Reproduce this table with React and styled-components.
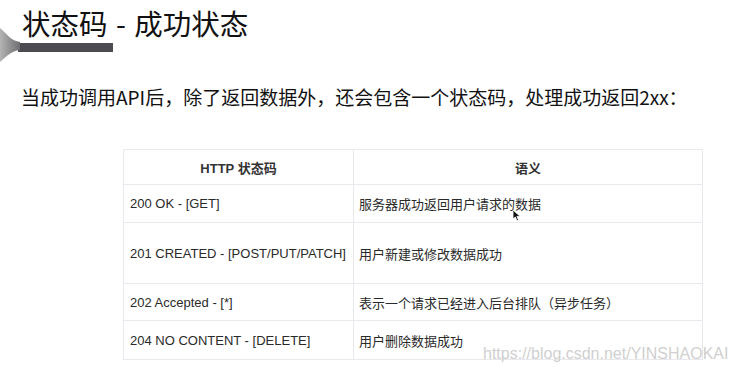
import React from "react";
import styled, { createGlobalStyle } from "styled-components";

const rows = [
  { code: "200 OK - [GET]", meaning: "服务器成功返回用户请求的数据", height: 38 },
  { code: "201 CREATED - [POST/PUT/PATCH]", meaning: "用户新建或修改数据成功", height: 61 },
  { code: "202 Accepted - [*]", meaning: "表示一个请求已经进入后台排队（异步任务）", height: 37 },
  { code: "204 NO CONTENT - [DELETE]", meaning: "用户删除数据成功", height: 39 },
];

const App = () => {
  return (
    <Page>
      <GlobalStyle />
      <Header>
        <Title>状态码 - 成功状态</Title>
        <Accent>
          <Flare width="20" height="36" viewBox="0 0 20 36">
            <defs>
              <linearGradient id="flare" x1="0" y1="0" x2="1" y2="0">
                <stop offset="0" stopColor="#b4b4b4" />
                <stop offset="1" stopColor="#6e6e72" />
              </linearGradient>
            </defs>
            <path d="M0 0 C7 6 11 13 20 14 L20 22 C11 23 7 28 0 34 Z" fill="url(#flare)" />
          </Flare>
          <Bar />
        </Accent>
      </Header>

      <Lead>当成功调用API后，除了返回数据外，还会包含一个状态码，处理成功返回2xx：</Lead>

      <Table>
        <thead>
          <tr>
            <HeadCell>HTTP 状态码</HeadCell>
            <HeadCell>语义</HeadCell>
          </tr>
        </thead>
        <tbody>
          {rows.map((row) => (
            <Row key={row.code} h={row.height}>
              <CodeCell>{row.code}</CodeCell>
              <Cell>{row.meaning}</Cell>
            </Row>
          ))}
        </tbody>
      </Table>

      <Cursor width="9" height="13" viewBox="0 0 9 13">
        <path d="M1 1 L1 10 L3.3 8 L5 11.8 L6.5 11.1 L4.9 7.5 L8 7.3 Z" fill="#111" stroke="#fff" strokeWidth="0.8" />
      </Cursor>
      <Watermark>https://blog.csdn.net/YINSHAOKAI</Watermark>
    </Page>
  );
};

export default App;

const GlobalStyle = createGlobalStyle`
  html, body {
    margin: 0;
    padding: 0;
    background: #ffffff;
  }
  body {
    font-family: "Liberation Sans", "Noto Sans CJK SC", sans-serif;
  }
`;

const Page = styled.div`
  position: relative;
  width: 735px;
  height: 372px;
  overflow: hidden;
  background: #ffffff;
`;

const Header = styled.div`
  position: relative;
  padding-top: 5px;
`;

const Title = styled.h1`
  margin: 0 0 0 22px;
  font-family: "Noto Sans CJK SC", sans-serif;
  font-size: 28.5px;
  font-weight: 400;
  line-height: 36px;
  word-spacing: 2px;
  color: #111111;
`;

const Accent = styled.div`
  display: flex;
  align-items: center;
  height: 9px;
  margin-top: 2px;
`;

const Flare = styled.svg`
  position: absolute;
  left: 0;
  top: 28px;
`;

const Bar = styled.div`
  margin-left: 18px;
  width: 95px;
  height: 9px;
  background: #4b4b51;
`;

const Lead = styled.p`
  margin: 33px 0 0 21px;
  font-family: "Noto Sans CJK SC", sans-serif;
  font-size: 19px;
  line-height: 24px;
  color: #111111;
`;

const Table = styled.table`
  margin: 40px 0 0 123px;
  width: 580px;
  border-collapse: collapse;
  table-layout: fixed;
  font-family: "Liberation Sans", "Noto Sans CJK SC", sans-serif;
  font-size: 13px;
  color: #2a2a2a;
  border: 1px solid #e4e4ea;
`;

const HeadCell = styled.th`
  height: 34px;
  padding: 0;
  font-weight: 700;
  text-align: center;
  border: 1px solid #e8e8ee;
  color: #333333;
  &:first-child {
    width: 229px;
  }
`;

const Row = styled.tr`
  height: ${({ h }) => h}px;
`;

const Cell = styled.td`
  padding: 0 0 0 5px;
  border: 1px solid #e8e8ee;
  vertical-align: middle;
  white-space: nowrap;
`;

const CodeCell = styled(Cell)`
  padding-left: 6px;
`;

const Cursor = styled.svg`
  position: absolute;
  left: 512px;
  top: 209px;
`;

const Watermark = styled.div`
  position: absolute;
  left: 483px;
  top: 345px;
  font-family: "Liberation Sans", sans-serif;
  font-size: 16px;
  line-height: 18px;
  color: #d0d0d0;
  white-space: nowrap;
`;
